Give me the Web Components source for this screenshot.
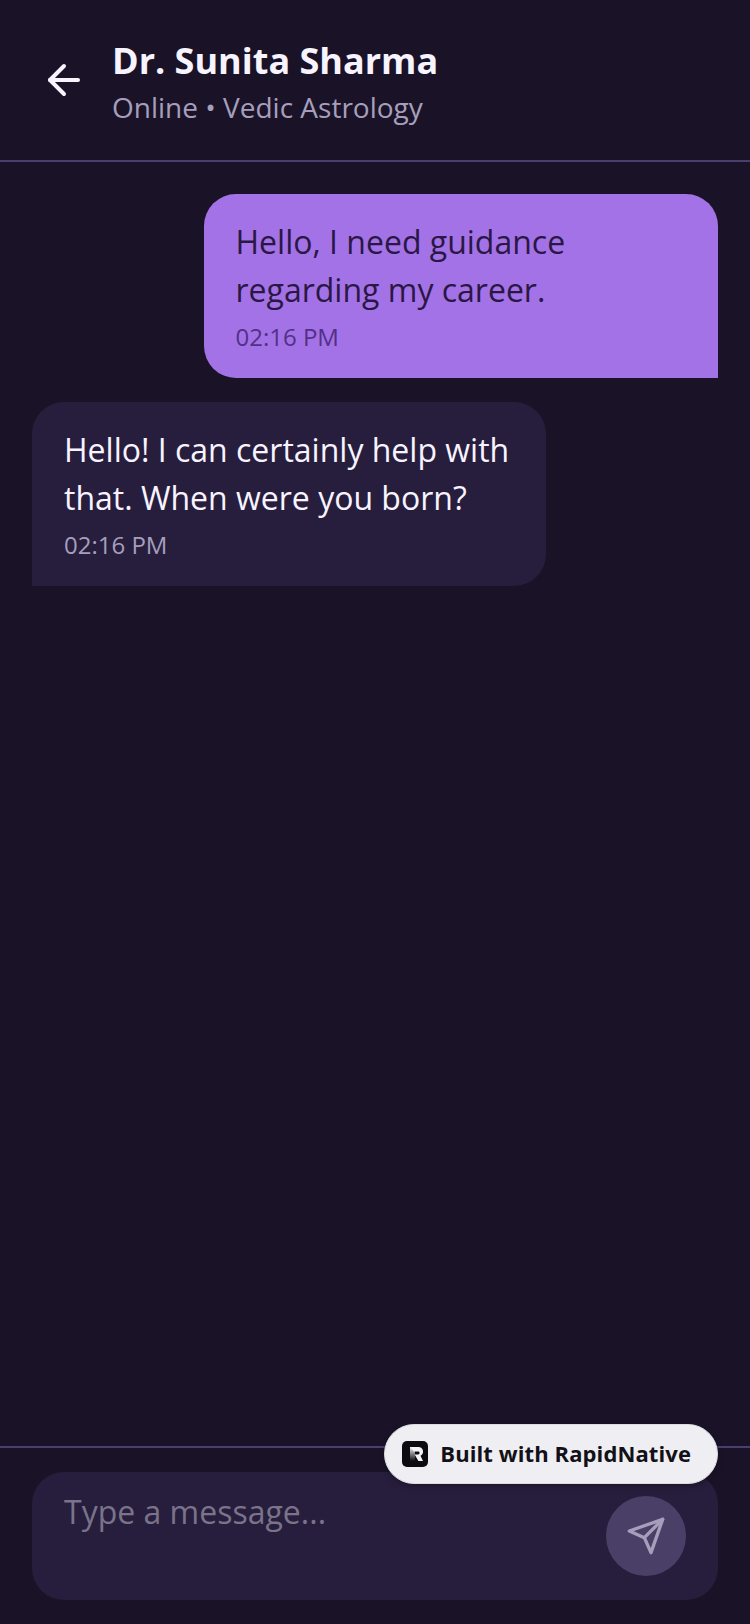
<!DOCTYPE html>
<html lang="en">
<head>
<meta charset="utf-8">
<title>Chat</title>
<style>
  html, body { margin: 0; height: 100%; background: #1a1328; }
  body { font-family: "Open Sans", sans-serif; }
</style>
</head>
<body>
<chat-screen>
  <chat-header slot="header" name="Dr. Sunita Sharma" info="Online • Vedic Astrology"></chat-header>
  <chat-bubble from="me" time="02:16 PM">Hello, I need guidance regarding my career.</chat-bubble>
  <chat-bubble from="them" time="02:16 PM">Hello! I can certainly help with that. When were you born?</chat-bubble>
  <chat-composer slot="composer" placeholder="Type a message..."></chat-composer>
  <built-badge slot="badge">Built with RapidNative</built-badge>
</chat-screen>

<script>
class ChatScreen extends HTMLElement {
  constructor() {
    super();
    this.attachShadow({ mode: "open" });
    this.shadowRoot.innerHTML = /*html*/`
      <style>
        :host { display: flex; flex-direction: column; position: relative; height: 1624px; background: #1a1328; overflow: hidden; }
        main { flex: 1; display: flex; flex-direction: column; gap: 24px; padding: 32px; }
        .badge { position: absolute; right: 32px; bottom: 140px; }
      </style>
      <slot name="header"></slot>
      <main><slot></slot></main>
      <slot name="composer"></slot>
      <div class="badge"><slot name="badge"></slot></div>
    `;
  }
}
customElements.define("chat-screen", ChatScreen);

class ChatHeader extends HTMLElement {
  connectedCallback() {
    const root = this.shadowRoot || this.attachShadow({ mode: "open" });
    root.innerHTML = /*html*/`
      <style>
        :host { display: flex; align-items: center; gap: 24px; box-sizing: border-box; height: 162px; padding: 0 32px 0 40px; border-bottom: 2px solid #4a3f6b; }
        svg { width: 48px; height: 48px; flex: none; display: block; }
        .text { margin-top: 4px; }
        h1 { margin: 0; font-size: 36px; line-height: 48px; font-weight: 700; color: #f8f4ff; }
        p { margin: 2px 0 0; font-size: 28px; line-height: 40px; color: #a69fbc; }
      </style>
      <svg viewBox="0 0 24 24" fill="none" stroke="#f8f4ff" stroke-width="2" stroke-linecap="round" stroke-linejoin="round">
        <path d="m12 19-7-7 7-7"/><path d="M19 12H5"/>
      </svg>
      <div class="text">
        <h1>${this.getAttribute("name")}</h1>
        <p>${this.getAttribute("info")}</p>
      </div>
    `;
  }
}
customElements.define("chat-header", ChatHeader);

class ChatBubble extends HTMLElement {
  connectedCallback() {
    const root = this.shadowRoot || this.attachShadow({ mode: "open" });
    root.innerHTML = /*html*/`
      <style>
        :host { display: block; box-sizing: border-box; padding: 24px 32px 16px; border-radius: 32px; }
        :host([from="me"]) { max-width: 514.5px; align-self: flex-end; background: #a372e6; color: #2a1745; border-bottom-right-radius: 0; }
        :host([from="them"]) { max-width: 514px; align-self: flex-start; background: #271e3d; color: #f8f4ff; border-bottom-left-radius: 0; }
        .msg { font-size: 32px; line-height: 48px; }
        .time { display: block; margin-top: 7px; font-size: 24px; line-height: 32px; padding-bottom: 9px; }
        :host([from="me"]) .time { color: #523087; }
        :host([from="them"]) .time { color: #a69fbc; }
      </style>
      <div class="msg"><slot></slot></div>
      <span class="time">${this.getAttribute("time")}</span>
    `;
  }
}
customElements.define("chat-bubble", ChatBubble);

class ChatComposer extends HTMLElement {
  connectedCallback() {
    const root = this.shadowRoot || this.attachShadow({ mode: "open" });
    root.innerHTML = /*html*/`
      <style>
        :host { display: block; padding: 24px 32px; border-top: 2px solid #4a3f6b; }
        .box { display: flex; align-items: center; justify-content: space-between; height: 128px; box-sizing: border-box; padding: 0 32px; border-radius: 32px; background: #271e3d; }
        .ph { align-self: flex-start; margin-top: 16px; font-size: 32px; line-height: 48px; color: #7a7389; }
        .send { width: 80px; height: 80px; border-radius: 50%; background: #4a3f66; display: flex; align-items: center; justify-content: center; }
        svg { width: 40px; height: 40px; display: block; }
      </style>
      <div class="box">
        <span class="ph">${this.getAttribute("placeholder")}</span>
        <div class="send">
          <svg viewBox="0 0 24 24" fill="none" stroke="#a69fbc" stroke-width="2" stroke-linecap="round" stroke-linejoin="round">
            <path d="m22 2-7 20-4-9-9-4Z"/><path d="M22 2 11 13"/>
          </svg>
        </div>
      </div>
    `;
  }
}
customElements.define("chat-composer", ChatComposer);

class BuiltBadge extends HTMLElement {
  constructor() {
    super();
    this.attachShadow({ mode: "open" });
    this.shadowRoot.innerHTML = /*html*/`
      <style>
        :host { display: flex; align-items: center; gap: 12px; box-sizing: border-box; height: 60px; padding: 0 26px 0 17px; border-radius: 30px; background: #efeef2; border: 1px solid #dcdbe2; box-shadow: 0 2px 6px rgba(0,0,0,.3); font-size: 22px; letter-spacing: .1px; font-weight: 700; color: #121118; white-space: nowrap; }
        svg { width: 26px; height: 26px; display: block; flex: none; }
        span { margin-top: -2px; }
      </style>
      <svg viewBox="0 0 26 26">
        <defs>
          <linearGradient id="stem" x1="0" y1="0" x2="0" y2="1">
            <stop offset="0" stop-color="#f4f4f6"/>
            <stop offset="1" stop-color="#0c0c10"/>
          </linearGradient>
        </defs>
        <rect width="26" height="26" rx="5" fill="#0c0c10"/>
        <path d="M8 6h5v14H8Z" fill="url(#stem)"/>
        <path d="M8 6h8.5a4.6 4.6 0 0 1 2 8.7L21 20h-4.6l-3.8-6.6h3.6a1.4 1.4 0 0 0 0-2.8H12Z" fill="#f4f4f6"/>
      </svg>
      <span><slot></slot></span>
    `;
  }
}
customElements.define("built-badge", BuiltBadge);
</script>
</body>
</html>
